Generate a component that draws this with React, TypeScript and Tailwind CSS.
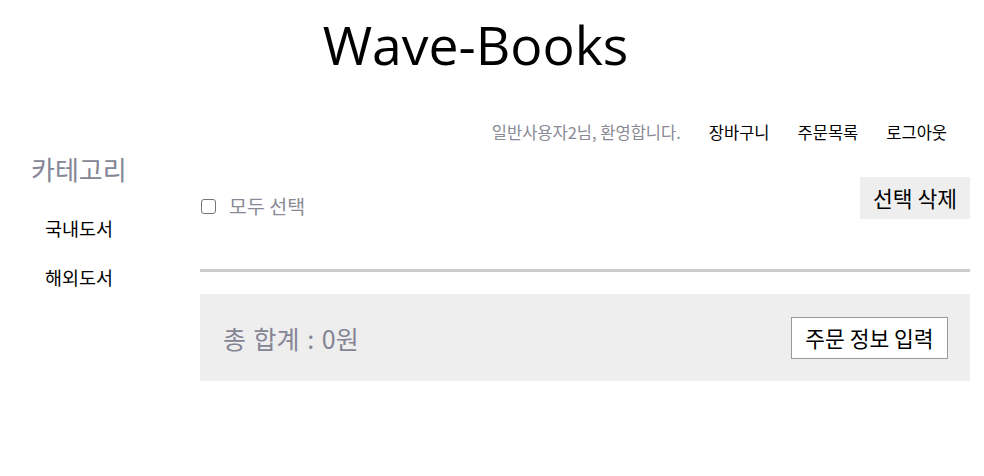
import { useState } from "react";

const KR = "font-['Noto_Sans_CJK_KR','Noto_Sans',sans-serif]";

export default function App() {
  const [all, setAll] = useState(false);

  return (
    <div className={`min-h-[476px] w-[984px] bg-white ${KR}`}>
      {/* title */}
      <header className="flex justify-center pr-[33px] pt-[9px]">
        <h1 className="font-['Open_Sans',sans-serif] text-[53.5px] font-normal leading-[72px] text-black">
          Wave-Books
        </h1>
      </header>

      {/* user nav */}
      <nav className="mt-[39px] flex items-center justify-end gap-[28px] pr-[37px] text-[16.5px] leading-[24px]">
        <span className="text-[#8a8a96]">일반사용자2님, 환영합니다.</span>
        <a className="text-black">장바구니</a>
        <a className="text-black">주문목록</a>
        <a className="text-black">로그아웃</a>
      </nav>

      <div className="mt-[14px] flex">
        {/* category sidebar */}
        <aside className="w-[200px] shrink-0 pl-[31px]">
          <h2 className="mt-[-6px] text-[26px] leading-[34px] text-[#858595]">카테고리</h2>
          <ul className="mt-[30px] flex flex-col gap-[24px] pl-[14px] text-[18.5px] leading-[25px] text-black">
            <li>국내도서</li>
            <li>해외도서</li>
          </ul>
        </aside>

        {/* cart */}
        <main className="mr-[14px] flex-1 pt-[19px]">
          <div className="flex items-start justify-between">
            <label className="mt-[16px] flex items-center gap-[13px] text-[19.5px] leading-[26px] text-[#8a8a96]">
              <span
                onClick={() => setAll((v) => !v)}
                className={`ml-[1px] h-[15px] w-[15px] rounded-[3px] border border-[#767676] ${all ? "bg-[#0075ff]" : "bg-white"}`}
              />
              모두 선택
            </label>
            <button className="h-[42px] w-[110px] bg-[#eeeeee] text-[21.5px] leading-[30px] text-black">
              선택 삭제
            </button>
          </div>

          <div className="mt-[50px] h-[3px] bg-[#cccccc]" />

          <section className="mt-[22px] flex h-[87px] items-center justify-between bg-[#eeeeee] pl-[23px] pr-[22px]">
            <span className="text-[25px] leading-[34px] text-[#858595] [word-spacing:2px]">총 합계 : 0원</span>
            <button className="h-[42px] w-[157px] border border-[#999999] bg-white text-[21.5px] leading-[30px] text-black">
              주문 정보 입력
            </button>
          </section>
        </main>
      </div>
    </div>
  );
}
